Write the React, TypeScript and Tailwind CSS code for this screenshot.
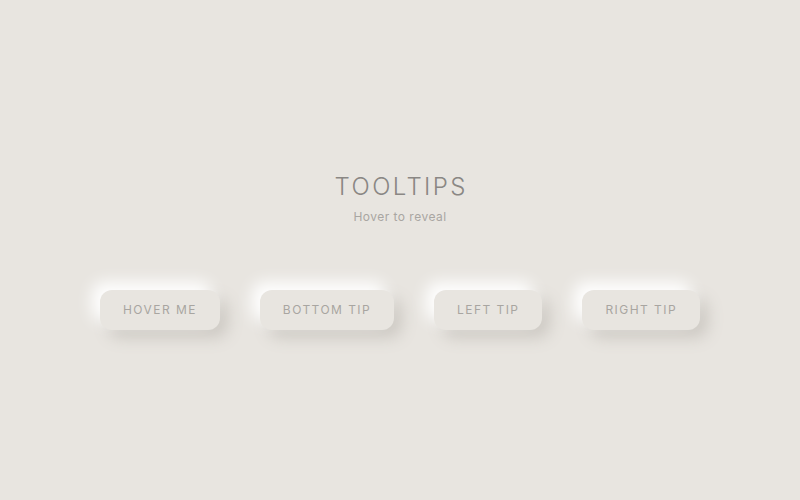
export default function App() {
  const buttons = ["Hover me", "Bottom tip", "Left tip", "Right tip"];

  return (
    <main className="flex h-[500px] w-full flex-col items-center justify-center bg-[#e8e5e0] font-[family-name:Inter,sans-serif]">
      <h1 className="pl-[0.1em] text-[24px] font-light uppercase leading-8 tracking-[0.1em] text-[#8a8784]">
        Tooltips
      </h1>
      <p className="mt-1 text-[12px] leading-5 tracking-[0.04em] text-[#a9a6a2]">Hover to reveal</p>

      <div className="mt-[63px] flex items-center gap-10">
        {buttons.map((label) => (
          <button
            key={label}
            className="h-10 rounded-xl bg-[#e8e5e0] px-[23px] text-[12px] uppercase tracking-[0.12em] text-[#a8a5a1] shadow-[-8px_-8px_16px_#ffffff,8px_8px_16px_#cdc9c3]"
          >
            {label}
          </button>
        ))}
      </div>
    </main>
  );
}
